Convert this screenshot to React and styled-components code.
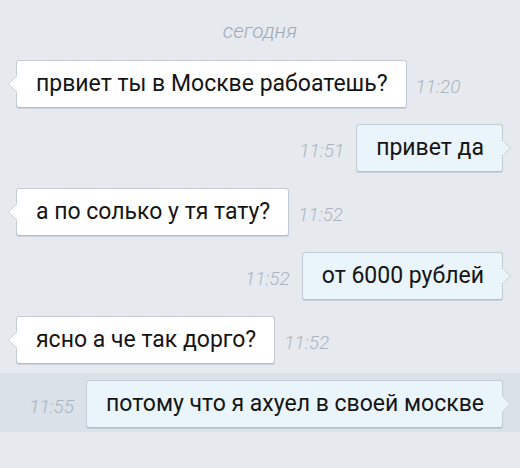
import React from 'react'
import styled, { createGlobalStyle } from 'styled-components'

const GlobalStyle = createGlobalStyle`
  html, body {
    margin: 0;
    padding: 0;
    background: #e6eaef;
  }
  body {
    font-family: Roboto, "Noto Sans", sans-serif;
  }
`

const messages = [
  { id: 1, out: false, text: 'првиет ты в Москве рабоатешь?', time: '11:20' },
  { id: 2, out: true, text: 'привет да', time: '11:51' },
  { id: 3, out: false, text: 'а по солько у тя тату?', time: '11:52' },
  { id: 4, out: true, text: 'от 6000 рублей', time: '11:52' },
  { id: 5, out: false, text: 'ясно а че так дорго?', time: '11:52' },
  { id: 6, out: true, text: 'потому что я ахуел в своей москве', time: '11:55', selected: true },
]

function Tail({ out }) {
  const fill = out ? '#e9f4fb' : '#ffffff'
  return (
    <TailBox $out={out} width="10" height="18" viewBox="0 0 10 18">
      {out ? (
        <path d="M0 0 L9 9 L0 18 Z" fill={fill} />
      ) : (
        <path d="M10 0 L1 9 L10 18 Z" fill={fill} />
      )}
      {out ? (
        <path d="M0 1 L8.5 9 L0 17" fill="none" stroke="#c2ccd6" strokeWidth="1" />
      ) : (
        <path d="M10 1 L1.5 9 L10 17" fill="none" stroke="#c2ccd6" strokeWidth="1" />
      )}
    </TailBox>
  )
}

function App() {
  return (
    <Chat>
      <GlobalStyle />
      <DateLabel>сегодня</DateLabel>
      {messages.map((m) => (
        <Row key={m.id} $out={m.out} $selected={m.selected}>
          <Bubble $out={m.out}>
            {m.text}
            <Tail out={m.out} />
          </Bubble>
          <Time>{m.time}</Time>
        </Row>
      ))}
    </Chat>
  )
}

const Chat = styled.div`
  width: 520px;
  height: 468px;
  background: #e6eaef;
  display: flex;
  flex-direction: column;
  overflow: hidden;
`

const DateLabel = styled.div`
  height: 53px;
  display: flex;
  align-items: center;
  justify-content: center;
  padding-top: 8px;
  box-sizing: border-box;
  font-size: 21px;
  font-style: italic;
  font-weight: 300;
  color: #9eabb9;
`

const Row = styled.div`
  display: flex;
  flex-direction: ${(p) => (p.$out ? 'row-reverse' : 'row')};
  align-items: center;
  gap: ${(p) => (p.$out ? '12px' : '9px')};
  padding: 7px 17px 4px 16px;
  margin-bottom: 5px;
  background: ${(p) => (p.$selected ? '#dae1e8' : 'transparent')};
`

const Bubble = styled.div`
  position: relative;
  height: 48px;
  box-sizing: border-box;
  display: flex;
  align-items: center;
  padding: 0 18px 1px 19px;
  background: ${(p) => (p.$out ? '#e9f4fb' : '#ffffff')};
  border: 1px solid #c2ccd6;
  border-bottom-color: #b4bfca;
  border-radius: 3px;
  box-shadow: 0 1px 0 rgba(150, 165, 180, 0.35);
  font-size: 23px;
  color: #151515;
  white-space: nowrap;
`

const TailBox = styled.svg`
  position: absolute;
  top: 50%;
  transform: translateY(-50%);
  ${(p) => (p.$out ? 'right: -10px;' : 'left: -10px;')}
`

const Time = styled.span`
  font-size: 19px;
  font-style: italic;
  font-weight: 300;
  color: #aab5c1;
  margin-top: 4px;
`

export default App
